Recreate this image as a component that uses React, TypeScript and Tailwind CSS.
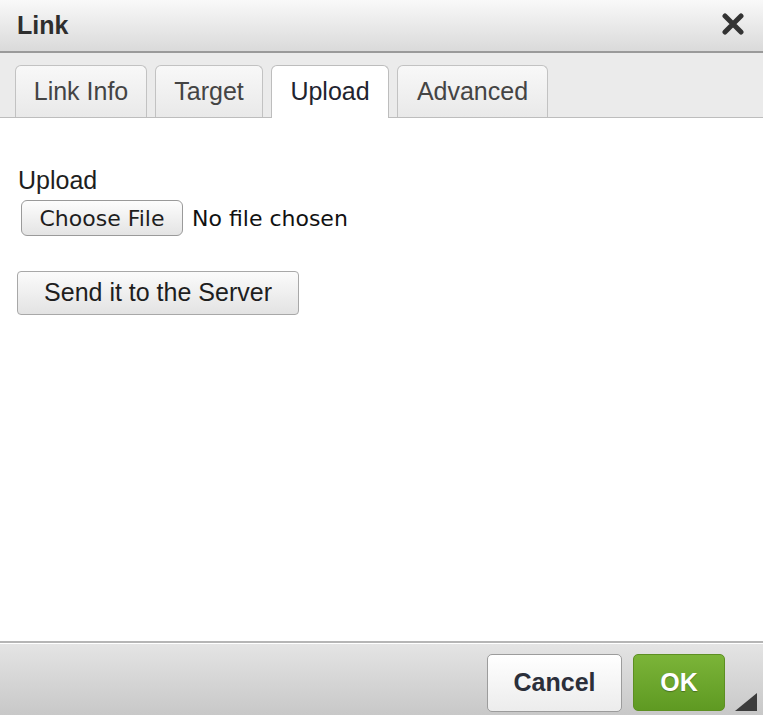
import React from 'react';

const tabs = [
    { label: 'Link Info', w: 'w-[132px]' },
    { label: 'Target', w: 'w-[108px]' },
    { label: 'Upload', w: 'w-[118px]', active: true },
    { label: 'Advanced', w: 'w-[151px]' },
];

export default function App() {
    return (
        <div className="w-[763px] h-[715px] flex flex-col bg-white overflow-hidden font-['Liberation_Sans',Arial,sans-serif]">
            {/* Title bar */}
            <div className="h-[53px] shrink-0 flex items-center justify-between pl-[17px] pr-[18px] bg-gradient-to-b from-[#f9f9f9] to-[#dadada] border-b-2 border-[#9a9a9a]">
                <span className="text-[25px] font-bold text-[#2e2e2e] leading-none">Link</span>
                <svg width="24" height="22" viewBox="0 0 24 22" className="mt-[-4px]">
                    <path d="M4 3 L20 19 M20 3 L4 19" stroke="#333" strokeWidth="5" strokeLinecap="round" />
                </svg>
            </div>

            {/* Tabs */}
            <div className="h-[65px] shrink-0 flex items-end gap-[8px] pl-[15px] bg-[#ebebeb] border-b border-[#bdbdbd]">
                {tabs.map((t) =>
                    t.active ? (
                        <div
                            key={t.label}
                            className={`${t.w} h-[53px] -mb-px flex items-center justify-center rounded-t-[6px] border border-b-0 border-[#bdbdbd] bg-white text-[25px] text-[#1f2430]`}
                        >
                            {t.label}
                        </div>
                    ) : (
                        <div
                            key={t.label}
                            className={`${t.w} h-[52px] flex items-center justify-center rounded-t-[6px] border border-b-0 border-[#c2c2c2] bg-gradient-to-b from-[#f8f8f8] to-[#e9e9e9] text-[25px] text-[#444]`}
                        >
                            {t.label}
                        </div>
                    )
                )}
            </div>

            {/* Content */}
            <div className="flex-1 flex flex-col items-start pl-[17px] pt-[48px]">
                <div className="text-[25px] leading-[29px] text-[#1e1e1e] pl-px">Upload</div>
                <div className="flex items-center mt-[5px] ml-[4px]">
                    <div className="w-[162px] h-[36px] flex items-center justify-center rounded-[6px] border border-[#9a9a9a] bg-gradient-to-b from-[#fdfdfd] to-[#e4e4e4] font-['DejaVu_Sans',sans-serif] text-[22px] text-[#1e1e1e]">
                        Choose File
                    </div>
                    <span className="ml-[9px] font-['DejaVu_Sans',sans-serif] text-[22px] text-[#111]">No file chosen</span>
                </div>
                <div className="mt-[35px] w-[282px] h-[44px] flex items-center justify-center rounded-[4px] border border-[#a8a8a8] bg-gradient-to-b from-[#fbfbfb] to-[#e3e3e3] text-[25px] text-[#1e1e1e]">
                    Send it to the Server
                </div>
            </div>

            {/* Footer */}
            <div className="relative h-[74px] shrink-0 border-t-2 border-[#b5b5b5]">
                <div className="h-full border-t border-white bg-gradient-to-b from-[#e4e4e4] to-[#c8c8c8] flex justify-end items-start pt-[10px] pr-[38px] gap-[11px]">
                    <div className="w-[135px] h-[58px] flex items-center justify-center rounded-[5px] border border-[#9c9c9c] bg-gradient-to-b from-[#ffffff] to-[#ececec] text-[25px] font-bold text-[#2b2f3a]">
                        Cancel
                    </div>
                    <div className="w-[92px] h-[57px] flex items-center justify-center rounded-[5px] border border-[#5d8f22] bg-gradient-to-b from-[#7bb438] to-[#5f9a22] text-[25px] font-bold text-white [text-shadow:0_1px_1px_rgba(0,0,0,0.3)]">
                        OK
                    </div>
                </div>
                <svg width="22" height="18" viewBox="0 0 22 18" className="absolute right-[6px] bottom-[4px]">
                    <path d="M22 0 L22 18 L0 18 Z" fill="#3c3c3c" />
                </svg>
            </div>
        </div>
    );
}
